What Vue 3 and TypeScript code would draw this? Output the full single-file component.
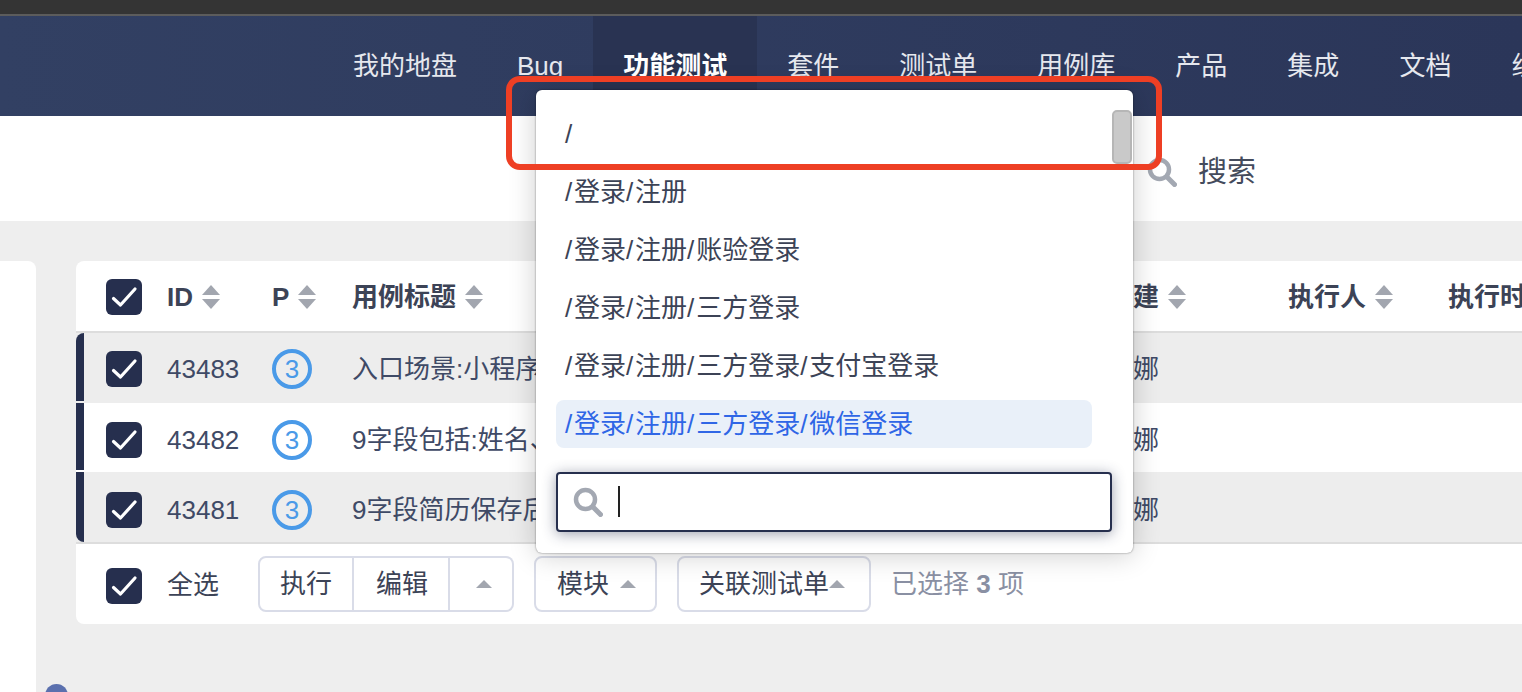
<script setup lang="ts">
const navItems = ['我的地盘', 'Bug', '功能测试', '套件', '测试单', '用例库', '产品', '集成', '文档', '组织']

const modules = [
  '/',
  '/登录/注册',
  '/登录/注册/账验登录',
  '/登录/注册/三方登录',
  '/登录/注册/三方登录/支付宝登录',
  '/登录/注册/三方登录/微信登录',
]

const rows = [
  { id: 43483, pri: 3, title: '入口场景:小程序', owner: '安娜' },
  { id: 43482, pri: 3, title: '9字段包括:姓名、', owner: '安娜' },
  { id: 43481, pri: 3, title: '9字段简历保存后', owner: '安娜' },
]
</script>

<template>
  <div class="page">
    <div class="topbar"></div>
    <nav class="nav">
      <a v-for="item in navItems" :key="item" class="nav__item" :class="{ 'nav__item--active': item === '功能测试' }">{{ item }}</a>
    </nav>

    <div class="subbar">
      <svg class="search-icon" viewBox="0 0 30 30" width="30" height="30">
        <circle cx="12.5" cy="12.5" r="9.5" fill="none" stroke="#a3a8b2" stroke-width="4.5" />
        <path d="M20 20l7.5 7.5" stroke="#a3a8b2" stroke-width="5" stroke-linecap="round" />
      </svg>
      <span class="subbar__label">搜索</span>
    </div>

    <main class="content">
      <aside class="side"></aside>
      <section class="card">
        <div class="grid head">
          <span class="check">
            <svg viewBox="0 0 36 36" width="36" height="36"><path d="M7.5 19.5l7 6.5L29 10" fill="none" stroke="#fff" stroke-width="3.2" stroke-linecap="round" stroke-linejoin="round" /></svg>
          </span>
          <span class="head__cell">ID<i class="sort"></i></span>
          <span class="head__cell">P<i class="sort"></i></span>
          <span class="head__cell">用例标题<i class="sort"></i></span>
          <span class="head__cell">创建<i class="sort"></i></span>
          <span class="head__cell">执行人<i class="sort"></i></span>
          <span class="head__cell">执行时间</span>
        </div>

        <div class="body">
          <div v-for="row in rows" :key="row.id" class="grid row">
            <span class="check">
              <svg viewBox="0 0 36 36" width="36" height="36"><path d="M7.5 19.5l7 6.5L29 10" fill="none" stroke="#fff" stroke-width="3.2" stroke-linecap="round" stroke-linejoin="round" /></svg>
            </span>
            <span>{{ row.id }}</span>
            <span><b class="pri">{{ row.pri }}</b></span>
            <span>{{ row.title }}</span>
            <span>{{ row.owner }}</span>
            <span></span>
            <span></span>
          </div>
        </div>

        <div class="foot">
          <span class="check foot__check">
            <svg viewBox="0 0 36 36" width="36" height="36"><path d="M7.5 19.5l7 6.5L29 10" fill="none" stroke="#fff" stroke-width="3.2" stroke-linecap="round" stroke-linejoin="round" /></svg>
          </span>
          <span class="foot__all">全选</span>
          <div class="btn-group">
            <button class="btn btn--run">执行</button>
            <button class="btn btn--edit">编辑</button>
            <button class="btn btn--more"><i class="caret"></i></button>
          </div>
          <button class="btn btn--solo btn--module">模块<i class="caret"></i></button>
          <button class="btn btn--solo btn--link">关联测试单<i class="caret"></i></button>
          <span class="foot__count">已选择 <b>3</b> 项</span>
        </div>
      </section>
      <span class="dot"></span>
    </main>

    <div class="picker">
      <ul class="picker__list">
        <li v-for="(m, i) in modules" :key="m" class="picker__opt" :class="{ 'picker__opt--on': i === modules.length - 1 }">
          <span><template v-for="(seg, j) in m.split('/').slice(1)" :key="j"><span class="slash">/</span>{{ seg }}</template></span>
        </li>
      </ul>
      <span class="picker__thumb"></span>
      <div class="picker__input">
        <svg viewBox="0 0 30 30" width="30" height="30">
          <circle cx="12.5" cy="12.5" r="9.5" fill="none" stroke="#a3a8b2" stroke-width="4.5" />
          <path d="M20 20l7.5 7.5" stroke="#a3a8b2" stroke-width="5" stroke-linecap="round" />
        </svg>
        <span class="picker__caret"></span>
      </div>
    </div>

    <div class="annotation"></div>
  </div>
</template>

<style scoped>
.page {
  position: relative;
  width: 1522px;
  height: 692px;
  overflow: hidden;
  background: #eeeeee;
  color: #3c4356;
  font-family: "Liberation Sans", "Noto Sans CJK SC", sans-serif;
  font-size: 26px;
  line-height: 32px;
}

.topbar {
  height: 14px;
  background: #343434;
  border-bottom: 2px solid #5c5c5c;
}

.nav {
  display: flex;
  height: 100px;
  padding-left: 323px;
  overflow: hidden;
  background: linear-gradient(90deg, #324063, #2b3659);
}

.nav__item {
  flex: none;
  padding: 0 30px;
  line-height: 100px;
  color: #e6e8ee;
  white-space: nowrap;
}

.nav__item--active {
  background: #293352;
  color: #fff;
  font-weight: 700;
}

.subbar {
  display: flex;
  align-items: center;
  gap: 21px;
  height: 105px;
  padding: 7px 0 0 1147px;
  box-sizing: border-box;
  background: #fff;
}

.subbar__label {
  font-size: 29px;
  color: #444b5c;
}

.content {
  position: relative;
  display: flex;
  gap: 40px;
  padding-top: 40px;
}

.side {
  flex: none;
  width: 36px;
  height: 500px;
  background: #fff;
  border-top-right-radius: 8px;
}

.card {
  flex: none;
  width: 1500px;
  height: 363px;
  background: #fff;
  border-radius: 8px;
  overflow: hidden;
}

.grid {
  display: grid;
  grid-template-columns: 61px 105px 80px 755px 181px 160px 1fr;
  align-items: center;
  padding-left: 30px;
}

.head {
  height: 72px;
  padding-top: 2px;
  box-sizing: border-box;
  border-bottom: 2px solid #dddddd;
}

.head__cell {
  display: flex;
  align-items: center;
  font-weight: 700;
  white-space: nowrap;
  color: #3c4356;
}

.sort {
  position: relative;
  display: inline-block;
  width: 18px;
  height: 24px;
  margin-left: 9px;
}

.sort::before,
.sort::after {
  content: "";
  position: absolute;
  left: 0;
  border-left: 9px solid transparent;
  border-right: 9px solid transparent;
}

.sort::before {
  top: 0;
  border-bottom: 10px solid #a2a6af;
}

.sort::after {
  bottom: 0;
  border-top: 10px solid #a2a6af;
}

.body {
  border-bottom: 2px solid #dddddd;
}

.row {
  position: relative;
  height: 70px;
  padding-top: 2px;
  box-sizing: border-box;
  white-space: nowrap;
  color: #3f4a66;
}

.row:nth-child(odd) {
  background: #ededed;
}

.row:nth-child(2) {
  height: 69px;
  padding-top: 5px;
}

.row:nth-child(3) {
  padding-top: 6px;
}

.row::before {
  content: "";
  position: absolute;
  left: 0;
  top: 0;
  bottom: 2px;
  width: 8px;
  background: #262f4e;
}

.row:first-child::before {
  border-top-left-radius: 8px;
}

.row:last-child::before {
  bottom: 0;
  border-bottom-left-radius: 8px;
}

.check {
  display: block;
  width: 36px;
  height: 36px;
  background: #262f4e;
  border-radius: 6px;
}

.check svg {
  display: block;
}

.pri {
  display: flex;
  align-items: center;
  justify-content: center;
  width: 40px;
  height: 40px;
  box-sizing: border-box;
  border: 4px solid #4a9ae8;
  border-radius: 50%;
  color: #4a9ae8;
  font-weight: 400;
  font-size: 26px;
}

.foot {
  display: flex;
  align-items: center;
  height: 80px;
  padding-left: 30px;
}

.foot__check {
  flex: none;
  margin-top: 4px;
}

.foot__all {
  margin: 2px 0 0 25px;
  width: 91px;
  flex: none;
}

.btn-group {
  display: flex;
  height: 56px;
  flex: none;
}

.btn {
  display: flex;
  align-items: center;
  justify-content: center;
  box-sizing: border-box;
  height: 56px;
  padding: 0;
  background: #fff;
  border: 2px solid #d9dce8;
  color: #3c4356;
  font: inherit;
}

.btn--run {
  width: 96px;
  border-radius: 8px 0 0 8px;
}

.btn--edit {
  width: 96px;
  padding-left: 2px;
  border-left: none;
}

.btn--more {
  width: 64px;
  padding-left: 6px;
  border-left: none;
  border-radius: 0 8px 8px 0;
}

.btn--solo {
  flex: none;
  border-radius: 8px;
}

.btn--module {
  width: 123px;
  margin-left: 20px;
  justify-content: flex-start;
  padding-left: 21px;
  gap: 11px;
}

.btn--link {
  width: 194px;
  margin-left: 20px;
  justify-content: flex-start;
  padding-left: 20px;
}

.caret {
  display: inline-block;
  border-left: 8px solid transparent;
  border-right: 8px solid transparent;
  border-bottom: 8px solid #a2a6af;
}

.foot__count {
  margin-left: 20px;
  color: #8a90a3;
  white-space: nowrap;
}

.dot {
  position: absolute;
  left: 45px;
  top: 463px;
  width: 23px;
  height: 23px;
  border-radius: 50%;
  background: #5b70ae;
}

.picker {
  position: absolute;
  left: 536px;
  top: 90px;
  width: 597px;
  height: 463px;
  box-sizing: border-box;
  background: #fff;
  border-radius: 6px;
  box-shadow: 0 0 2px rgba(0, 0, 0, 0.5), 0 2px 28px rgba(0, 0, 0, 0.2);
}

.picker__list {
  list-style: none;
  margin: 0;
  padding: 20px 41px 0 20px;
}

.picker__opt {
  display: flex;
  align-items: center;
  height: 48px;
  margin-bottom: 10px;
  padding-left: 9px;
  box-sizing: border-box;
  border-radius: 8px;
  white-space: nowrap;
  color: #3c4356;
}

.slash {
  letter-spacing: 1.8px;
}

.picker__opt--on {
  background: #e9f0f9;
  color: #2f66e6;
}

.picker__thumb {
  position: absolute;
  left: 576px;
  top: 20px;
  width: 20px;
  height: 54px;
  box-sizing: border-box;
  background: #c9c9c9;
  border: 2px solid #b6b6b6;
  border-radius: 5px;
}

.picker__input {
  position: absolute;
  left: 20px;
  top: 382px;
  display: flex;
  align-items: center;
  gap: 15px;
  width: 556px;
  height: 60px;
  box-sizing: border-box;
  padding-left: 15px;
  background: #fff;
  border: 2px solid #262f4e;
  border-radius: 4px;
  box-shadow: 0 2px 14px rgba(38, 47, 78, 0.45);
}

.picker__caret {
  width: 2px;
  height: 31px;
  margin-bottom: 2px;
  background: #222;
}

.annotation {
  position: absolute;
  left: 506px;
  top: 76px;
  width: 656px;
  height: 94px;
  box-sizing: border-box;
  border: 6px solid #ee3f24;
  border-radius: 14px;
}
</style>
